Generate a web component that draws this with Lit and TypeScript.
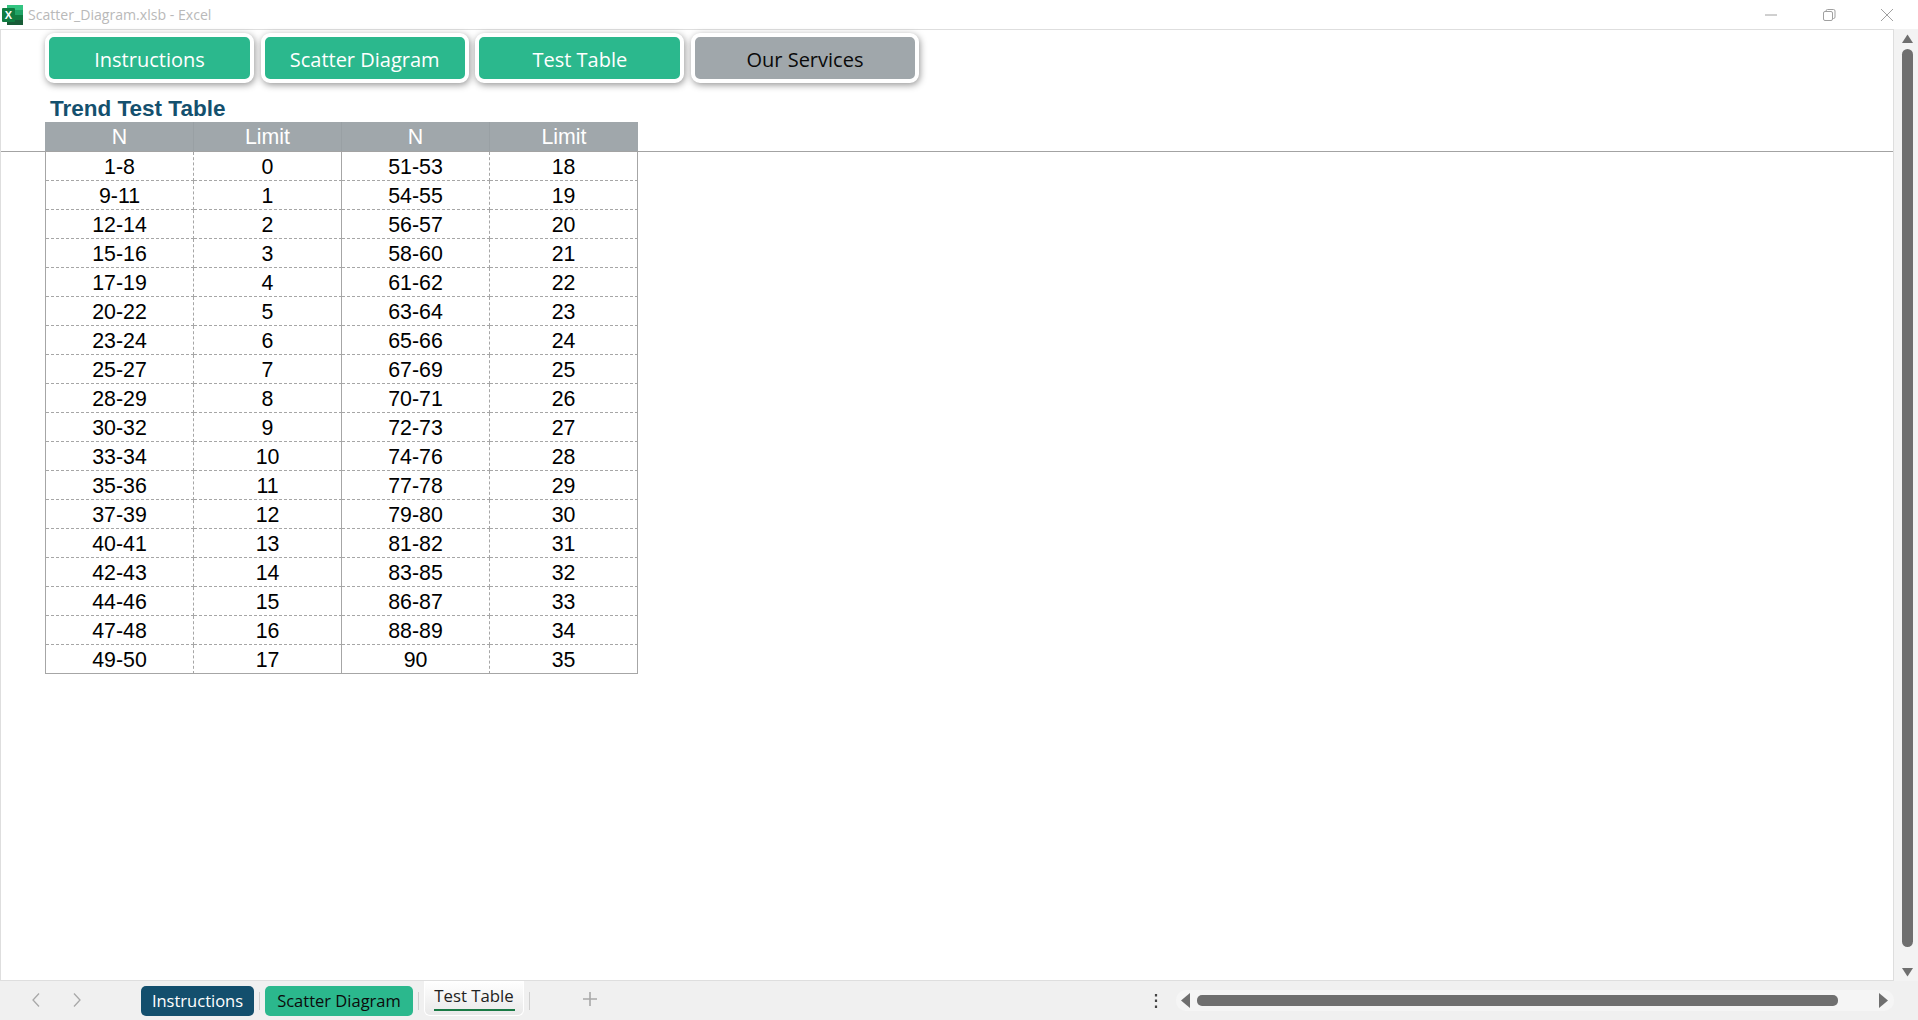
import { LitElement, html, css } from "lit";
import { customElement } from "lit/decorators.js";

const ROWS: [string, string, string, string][] = [
  ["1-8","0","51-53","18"],["9-11","1","54-55","19"],["12-14","2","56-57","20"],
  ["15-16","3","58-60","21"],["17-19","4","61-62","22"],["20-22","5","63-64","23"],
  ["23-24","6","65-66","24"],["25-27","7","67-69","25"],["28-29","8","70-71","26"],
  ["30-32","9","72-73","27"],["33-34","10","74-76","28"],["35-36","11","77-78","29"],
  ["37-39","12","79-80","30"],["40-41","13","81-82","31"],["42-43","14","83-85","32"],
  ["44-46","15","86-87","33"],["47-48","16","88-89","34"],["49-50","17","90","35"],
];
const HEAD = ["N", "Limit", "N", "Limit"];
const NAV = [
  { label: "Instructions", cls: "green" },
  { label: "Scatter Diagram", cls: "green" },
  { label: "Test Table", cls: "green" },
  { label: "Our Services", cls: "grey" },
];

@customElement("app-root")
export class AppRoot extends LitElement {
  static styles = css`
    :host { display: flex; flex-direction: column; width: 1918px; height: 1020px; overflow: hidden; background: #fff; font-family: "Open Sans", "Noto Sans", sans-serif; }
    .titlebar { height: 29px; flex: none; display: flex; align-items: center; background: #fff; }
    .logo { width: 21px; height: 20px; margin-left: 2px; flex: none; }
    .doc { margin-left: 5px; font-size: 14.1px; color: #b9b9b9; flex: 1; }
    .winbtns { display: flex; align-items: center; padding-right: 2px; }
    .winbtn { width: 58px; height: 29px; display: flex; align-items: center; justify-content: center; }
    .winbtns svg { width: 14px; height: 14px; display: block; }

    .main { flex: 1; min-height: 0; display: flex; background: #f0f0f0; }
    .sheet { width: 1894px; flex: none; box-sizing: border-box; background: #fff; border: 1px solid #dedede; }
    .frozen { box-sizing: border-box; height: 122px; padding-left: 44px; border-bottom: 1px solid #a3a3a3; display: flex; flex-direction: column; }

    .nav { display: grid; grid-template-columns: 209px 208px 209px 228px; column-gap: 6.67px; padding-top: 3px; width: max-content; }
    .navbtn { box-sizing: border-box; height: 50px; border: 4px solid #fff; border-radius: 9px; box-shadow: 1px 2px 7px rgba(0,0,0,.42); display: flex; align-items: center; justify-content: center; font-size: 20px; padding-top: 2px; }
    .navbtn.green { background: #2bb88d; color: #fff; }
    .navbtn.grey { background: #a0a7ab; color: #0a0a0a; }

    .heading { height: 39px; box-sizing: border-box; padding-left: 5px; display: flex; align-items: flex-end; font: bold 22.5px "Liberation Sans", Arial, sans-serif; color: #14506e; line-height: 27px; }
    .row { display: grid; grid-template-columns: repeat(4, 148px); font: 21.33px "Liberation Sans", Arial, sans-serif; }
    .head { width: 593px; background: #a0a7ab; color: #fff; height: 29px; box-sizing: border-box; padding-left: 1px; }
    .head div { display: flex; align-items: center; justify-content: center; height: 29px; box-sizing: border-box; padding-top: 2px; border-right: 1px solid #99a0a4; }
    .head div:last-child { border-right: none; }
    .body { margin-left: 44px; width: 593px; box-sizing: border-box; border-left: 1px solid #a6a6a6; color: #000; }
    .cell { height: 29px; box-sizing: border-box; padding-top: 2px; display: flex; align-items: center; justify-content: center; border-bottom: 1px dashed #a6a6a6; border-right: 1px dashed #a6a6a6; }
    .cell:nth-child(2), .cell:nth-child(4) { border-right: 1px solid #a6a6a6; }
    .row:last-child .cell { border-bottom: 1px solid #a6a6a6; }

    .vscroll { flex: 1; display: flex; flex-direction: column; align-items: center; background: #f3f3f3; padding: 5px 0 0 2px; box-sizing: border-box; }
    .vscroll .arrow { width: 11px; height: 9px; flex: none; display: block; }
    .vthumb { width: 11px; height: 898px; flex: none; background: #6f6f6f; border-radius: 6px; margin: 6px 0 21px; }

    .tabbar { height: 39px; flex: none; display: flex; align-items: center; background: #f0f0f0; box-sizing: border-box; }
    .tabnav { width: 141px; flex: none; display: flex; padding-left: 30px; padding-bottom: 2px; box-sizing: border-box; gap: 29px; }
    .tabnav svg { width: 12px; height: 16px; display: block; }
    .tab { height: 30px; box-sizing: border-box; border-radius: 5px; display: flex; align-items: center; justify-content: center; font-size: 16.5px; }
    .tab.a { width: 113px; background: #134f6d; color: #fff; }
    .tab.b { width: 148px; background: #2bb88d; color: #0b0b0b; }
    .tab.c { width: 100px; height: 35px; align-self: flex-start; background: linear-gradient(#fff, #e9e9e9); border: 1px solid #fff; border-top: none; border-radius: 0 0 6px 6px; flex-direction: column; color: #222; font-weight: 500; font-size: 16.8px; line-height: 22px; justify-content: flex-start; padding-top: 4px; }
    .tab.c span { display: block; padding-bottom: 2px; border-bottom: 2px solid #1a7a45; width: 81px; text-align: center; box-sizing: border-box; white-space: nowrap; }
    .sep { width: 1px; height: 18px; background: #cfcfcf; flex: none; margin: 0 5px; }
    .plus { width: 18px; height: 18px; flex: none; margin-left: 46px; margin-bottom: 3px; display: block; }
    .dots { width: 4px; height: 16px; flex: none; margin-left: 555px; display: block; }
    .hscroll { width: 718px; height: 21px; margin-left: 18px; flex: none; border-radius: 10px; background: #f5f5f5; display: flex; align-items: center; box-sizing: border-box; padding: 0 7px 0 5px; }
    .hscroll svg { width: 9px; height: 15px; flex: none; display: block; }
    .hthumb { width: 641px; height: 11px; flex: none; background: #6f6f6f; border-radius: 5px; margin: 0 41px 0 7px; }
  `;

  private logo() {
    return html`<svg class="logo" viewBox="0 0 21 20">
      <rect x="5" y="0" width="16" height="20" rx="1" fill="#21a366"/>
      <rect x="5" y="0" width="16" height="5" fill="#33c481"/>
      <rect x="5" y="10" width="8" height="5" fill="#107c41"/>
      <rect x="13" y="10" width="8" height="5" fill="#107c41"/>
      <rect x="5" y="15" width="16" height="5" fill="#185c37"/>
      <rect x="0" y="3" width="13" height="14" rx="1" fill="#107c41"/>
      <text x="6.5" y="14" font-family="Liberation Sans, sans-serif" font-size="11" font-weight="700" fill="#fff" text-anchor="middle">X</text>
    </svg>`;
  }

  render() {
    return html`
      <div class="titlebar">
        ${this.logo()}
        <span class="doc">Scatter_Diagram.xlsb - Excel</span>
        <div class="winbtns">
          <div class="winbtn"><svg viewBox="0 0 14 14"><path d="M1 7h12" stroke="#a0a0a0" stroke-width="1" fill="none"/></svg></div>
          <div class="winbtn"><svg viewBox="0 0 14 14" fill="none" stroke="#a0a0a0"><rect x="1.5" y="3.5" width="9" height="9" rx="1.5"/><path d="M4 3.5V3a1.5 1.5 0 0 1 1.5-1.5h6A1.5 1.5 0 0 1 13 3v6a1.5 1.5 0 0 1-1.5 1.5h-1"/></svg></div>
          <div class="winbtn"><svg viewBox="0 0 14 14"><path d="M1 1l12 12M13 1L1 13" stroke="#a0a0a0" stroke-width="1" fill="none"/></svg></div>
        </div>
      </div>
      <div class="main">
        <div class="sheet">
          <div class="frozen">
            <div class="nav">
              ${NAV.map((n) => html`<div class="navbtn ${n.cls}">${n.label}</div>`)}
            </div>
            <div class="heading">Trend Test Table</div>
            <div class="row head">${HEAD.map((h) => html`<div>${h}</div>`)}</div>
          </div>
          <div class="body">
            ${ROWS.map((r) => html`<div class="row">${r.map((c) => html`<div class="cell">${c}</div>`)}</div>`)}
          </div>
        </div>
        <div class="vscroll">
          <svg class="arrow" viewBox="0 0 11 9"><path d="M5.5 0.5L11 9H0z" fill="#6f6f6f"/></svg>
          <div class="vthumb"></div>
          <svg class="arrow" viewBox="0 0 11 9"><path d="M5.5 8.5L11 0H0z" fill="#6f6f6f"/></svg>
        </div>
      </div>
      <div class="tabbar">
        <div class="tabnav">
          <svg viewBox="0 0 12 16"><path d="M9 1.5L3 8l6 6.5" stroke="#a8a8a8" stroke-width="1.3" fill="none"/></svg>
          <svg viewBox="0 0 12 16"><path d="M3 1.5L9 8l-6 6.5" stroke="#a8a8a8" stroke-width="1.3" fill="none"/></svg>
        </div>
        <div class="tab a">Instructions</div>
        <div class="sep"></div>
        <div class="tab b">Scatter Diagram</div>
        <div class="sep"></div>
        <div class="tab c"><span>Test Table</span></div>
        <div class="sep"></div>
        <svg class="plus" viewBox="0 0 18 18"><path d="M9 2v14M2 9h14" stroke="#a8a8a8" stroke-width="1.6" fill="none"/></svg>
        <svg class="dots" viewBox="0 0 4 16"><path d="M2 1v2.5M2 6.5V9M2 12.5V15" stroke="#444" stroke-width="2.2" fill="none"/></svg>
        <div class="hscroll">
          <svg viewBox="0 0 9 15"><path d="M0 7.5L9 0v15z" fill="#6f6f6f"/></svg>
          <div class="hthumb"></div>
          <svg viewBox="0 0 9 15"><path d="M9 7.5L0 0v15z" fill="#6f6f6f"/></svg>
        </div>
      </div>
    `;
  }
}
